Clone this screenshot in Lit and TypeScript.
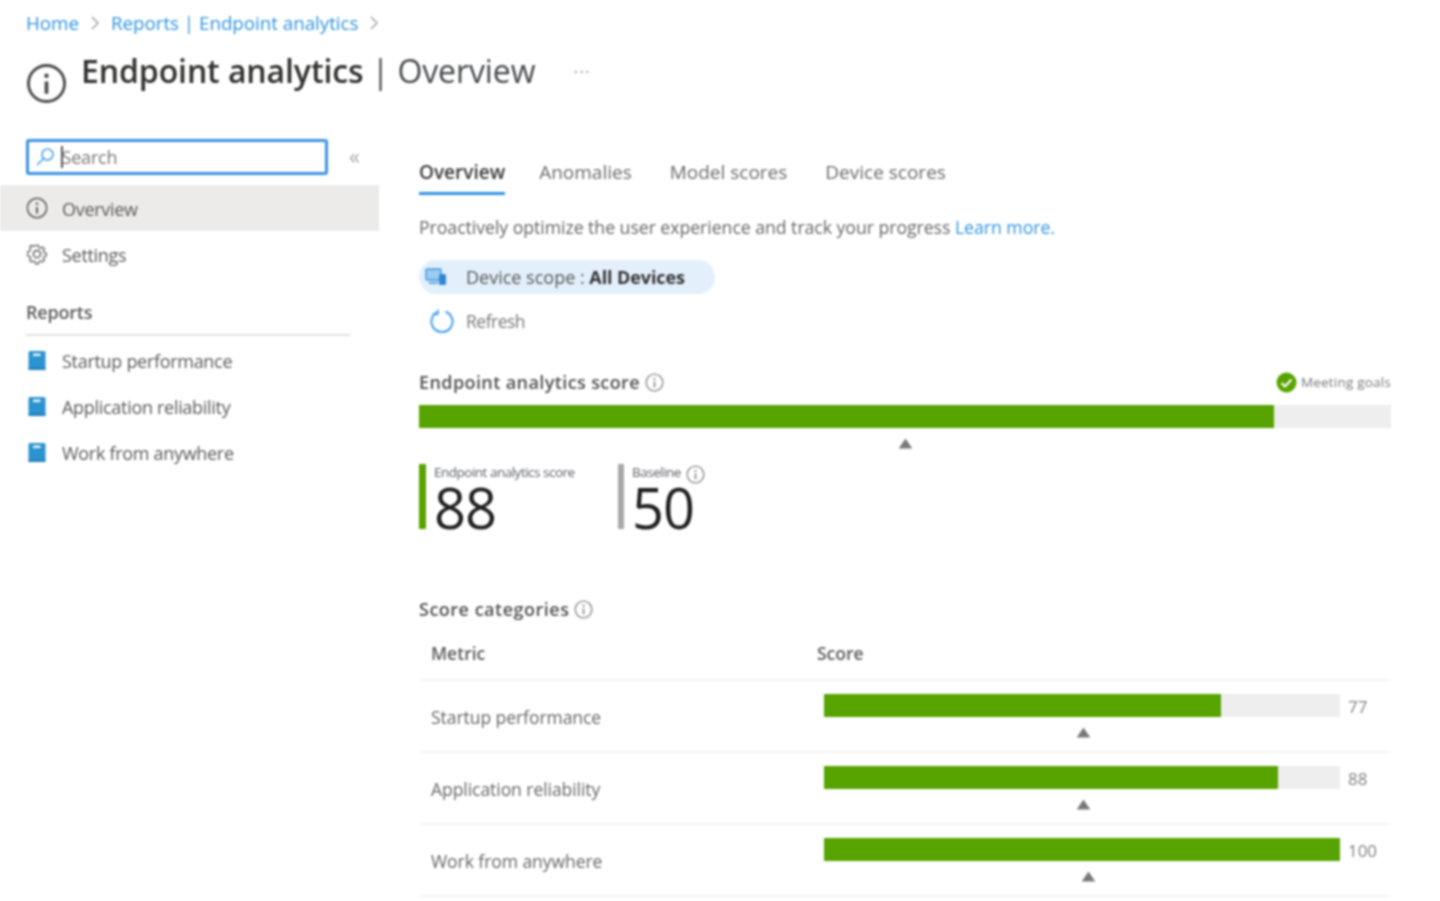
import { LitElement, html, css } from "lit";
import { customElement } from "lit/decorators.js";

const infoIcon = (cls: string) => html`<svg class=${cls} viewBox="0 0 20 20" fill="none" stroke="currentColor">
  <circle cx="10" cy="10" r="8.8" stroke-width="1.4"></circle>
  <circle cx="10" cy="6.2" r="1.1" fill="currentColor" stroke="none"></circle>
  <path d="M10 9v6" stroke-width="1.8"></path></svg>`;

const bookIcon = html`<svg class="ico-book" viewBox="0 0 18 20">
  <rect x="0.5" y="0.5" width="17" height="19" rx="1.5" fill="#2b93cf"></rect>
  <rect x="5" y="3" width="7.5" height="2.6" fill="#e8f4fb"></rect>
  <rect x="0.5" y="17.2" width="17" height="2.3" fill="#2382bd"></rect></svg>`;

const tri = html`<svg class="tri" viewBox="0 0 16 12"><path d="M8 0.5 15.5 11.5H0.5Z" fill="#77787a"></path></svg>`;

const rows = [
  { name: "Startup performance", score: 77, marker: 259 },
  { name: "Application reliability", score: 88, marker: 259 },
  { name: "Work from anywhere", score: 100, marker: 264 },
];

@customElement("app-root")
export class AppRoot extends LitElement {
  static styles = css`
    :host { display: block; height: 901px; overflow: hidden; background: #fff; color: #323130;
      font-family: "Open Sans", "Noto Sans", sans-serif; font-size: 18px; }
    * { box-sizing: border-box; }
    .wrap { height: 901px; filter: blur(0.8px); }
    .crumbs { display: flex; align-items: center; height: 24px; padding-top: 11px; box-sizing: content-box; color: #2f93e0; font-size: 18.8px; letter-spacing: -0.03px; padding-left: 26px; }
    .crumbs svg { width: 10px; height: 16px; margin: 0 11px; }
    .crumbs svg.last { margin: 0 0 0 11px; }
    .head { display: flex; align-items: flex-start; padding-left: 26px; height: 105px; }
    .head .ico-big { width: 41px; height: 41px; margin-top: 28px; color: #4a4a4a; }
    .head h1 { margin: 13px 0 0 14px; font-size: 32px; line-height: 46px; font-weight: 600; letter-spacing: -0.1px; color: #323130; white-space: nowrap; }
    .head h1 span { font-weight: 400; color: #45484a; }
    .dots { margin: 26px 0 0 38px; color: #a0a0a0; font-size: 18px; line-height: 20px; letter-spacing: 1px; }
    .body { display: flex; }
    .side { width: 379px; flex: none; font-size: 18px; letter-spacing: -0.3px; color: #5a5a5a; }
    .searchrow { display: flex; align-items: center; padding-left: 26px; height: 36px; margin-top: -1px; }
    .search { width: 302px; height: 36px; border: 3px solid #3b93e4; border-radius: 3px; display: flex; align-items: center; padding-left: 6px; color: #777; letter-spacing: -0.2px; }
    .search svg { width: 20px; height: 20px; margin-right: 6px; }
    .search .caret { width: 1.5px; height: 22px; background: #555; margin-right: -1px; }
    .collapse { margin-left: 21px; padding-bottom: 4px; color: #a6a6a6; font-size: 22px; line-height: 30px; }
    .nav { display: flex; align-items: center; height: 46px; padding: 2px 0 0 26px; gap: 14px; white-space: nowrap; }
    .nav.sel { background: #edebe9; margin-top: 10px; }
    .nav .ico { width: 22px; height: 22px; margin-top: -2px; color: #5a5a5a; flex: none; }
    .ico-book { width: 18px; height: 21px; margin: -2px 2px 0; flex: none; }
    .group { margin: 14px 29px 1px 26px; height: 45px; line-height: 42px; border-bottom: 2px solid #e3e3e3; font-weight: 600; font-size: 18px; letter-spacing: -0.2px; color: #5c5c5c; }
    .main { width: 972px; margin-left: 40px; flex: none; margin-top: 10px; }
    .tabs { display: flex; gap: 38px; height: 62px; color: #6a6a6a; font-size: 19px; }
    .tab { height: 45px; padding-top: 9px; line-height: 26px; white-space: nowrap; }
    .tab.on { color: #3a3a3a; font-weight: 600; border-bottom: 3px solid #2f93e0; margin-right: -4px; }
    .desc { height: 48px; line-height: 30px; color: #666; font-size: 17.7px; letter-spacing: -0.05px; white-space: nowrap; }
    .desc a { color: #2f93e0; }
    .chip { display: flex; align-items: center; width: 296px; height: 34px; background: #e3f0fb; border-radius: 17px; padding-left: 6px; font-size: 18px; color: #555; white-space: nowrap; }
    .chip svg { width: 23px; height: 20px; margin-right: 18px; flex: none; }
    .chip b { font-weight: 700; color: #333; letter-spacing: -0.1px; }
    .refresh { display: flex; align-items: center; height: 42px; padding-left: 10px; gap: 11px; margin-top: 6px; color: #777; font-size: 17.5px; letter-spacing: -0.5px; }
    .refresh svg { width: 26px; height: 26px; }
    .sec { display: flex; align-items: center; gap: 5px; font-weight: 600; font-size: 18px; letter-spacing: 0.4px; color: #505050; height: 26px; white-space: nowrap; }
    .sec svg { width: 19px; height: 19px; color: #8a8a8a; }
    .scorehead { display: flex; justify-content: space-between; margin-top: 27px; }
    .goal { display: flex; align-items: center; gap: 4px; font-size: 13.5px; letter-spacing: 0.2px; color: #75787c; }
    .goal svg { width: 21px; height: 21px; }
    .track { background: #eeeeee; height: 23px; }
    .fill { background: #57a300; height: 100%; }
    .bigtrack { margin-top: 10px; }
    .tri { display: block; width: 15px; height: 11px; }
    .bigtri { margin: 10px 0 0 479px; }
    .tiles { display: flex; margin-top: 15px; height: 65px; }
    .tile { border-left: 7px solid #57a300; padding-left: 8px; width: 199px; height: 65px; }
    .tile.base { border-left-color: #a8a8a8; border-left-width: 6px; }
    .tile .lab { height: 16px; font-size: 13.5px; line-height: 16px; letter-spacing: -0.5px; color: #5c5f66; white-space: nowrap; display: flex; }
    .tile .lab svg { width: 19px; height: 19px; margin: 1px 0 0 5px; color: #8a8a8a; flex: none; }
    .tile .num { font-size: 56px; line-height: 48px; margin-top: 3px; color: #1f1f1f; letter-spacing: -1px; }
    .cat { margin-top: 67px; letter-spacing: 0.5px; }
    .thead { display: flex; height: 59px; border-bottom: 2px solid #f3f3f3; padding: 5px 12px 0; align-items: center; font-weight: 600; font-size: 17.5px; color: #5c5c5c; }
    .thead .m { width: 386px; }
    .row { display: flex; height: 72px; border-bottom: 2px solid #f3f3f3; padding-left: 12px; color: #666; font-size: 17.5px; letter-spacing: -0.05px; }
    .row .m { width: 393px; padding-top: 21px; line-height: 30px; white-space: nowrap; }
    .row .s { padding-top: 12px; }
    .barline { display: flex; align-items: center; }
    .barline .track { width: 516px; }
    .barline .val { margin: 2px 0 0 8px; font-size: 17px; color: #808080; }
    .row .tri { margin-top: 9px; }
  `;

  render() {
    return html`<div class="wrap">
      <div class="crumbs">Home
        <svg viewBox="0 0 10 16" fill="none" stroke="#a5a5a5" stroke-width="1.5"><path d="M2 2l6 6-6 6"></path></svg>
        Reports | Endpoint analytics
        <svg class="last" viewBox="0 0 10 16" fill="none" stroke="#a5a5a5" stroke-width="1.5"><path d="M2 2l6 6-6 6"></path></svg>
      </div>
      <div class="head">
        ${infoIcon("ico-big")}
        <h1>Endpoint analytics <span>| Overview</span></h1>
        <div class="dots">···</div>
      </div>
      <div class="body">
        <div class="side">
          <div class="searchrow">
            <div class="search">
              <svg viewBox="0 0 20 20" fill="none" stroke="#4a9fe8" stroke-width="1.6"><circle cx="12.5" cy="7.5" r="5.5"></circle><path d="M8.5 11.5 2 18"></path></svg>
              <span class="caret"></span>Search
            </div>
            <div class="collapse">«</div>
          </div>
          <div class="nav sel">${infoIcon("ico")}Overview</div>
          <div class="nav">
            <svg class="ico" viewBox="0 0 22 22" fill="none" stroke="currentColor" stroke-width="1.5">
              <circle cx="11" cy="11" r="3.6"></circle>
              <path d="M9.2 1.5h3.6l.6 2.8 2.1.9 2.4-1.5 2.5 2.5-1.5 2.4.9 2.1 2.8.6v3.6l-2.8.6-.9 2.1 1.5 2.4-2.5 2.5-2.4-1.5-2.1.9-.6 2.8H9.2l-.6-2.8-2.1-.9-2.4 1.5-2.5-2.5 1.5-2.4-.9-2.1-2.8-.6V9.2l2.8-.6.9-2.1-1.5-2.4 2.5-2.5 2.4 1.5 2.1-.9z" transform="translate(2.2 1.1) scale(.8)"></path>
            </svg>Settings
          </div>
          <div class="group">Reports</div>
          ${rows.map((r) => html`<div class="nav">${bookIcon}${r.name}</div>`)}
        </div>
        <div class="main">
          <div class="tabs">
            <div class="tab on">Overview</div>
            <div class="tab">Anomalies</div>
            <div class="tab">Model scores</div>
            <div class="tab">Device scores</div>
          </div>
          <div class="desc">Proactively optimize the user experience and track your progress <a>Learn more.</a></div>
          <div class="chip">
            <svg viewBox="0 0 23 20">
              <rect x="1" y="2" width="15" height="11" rx="1" fill="#9ccbf2" stroke="#3f94e0" stroke-width="1.4"></rect>
              <rect x="14" y="7" width="7" height="11" rx="1.5" fill="#2f86d8"></rect>
              <path d="M4 16h9" stroke="#3f94e0" stroke-width="1.6"></path>
            </svg>
            <span>Device scope :&nbsp;<b>All Devices</b></span>
          </div>
          <div class="refresh">
            <svg viewBox="0 0 26 26" fill="none" stroke="#55a6ec" stroke-width="2.2">
              <path d="M9.5 3.6a10.5 10.5 0 1 0 7 0"></path>
              <path d="M9 1.5v5h-5" stroke-width="1.6" transform="rotate(8 9 4)"></path>
            </svg>
            Refresh
          </div>
          <div class="scorehead">
            <div class="sec">Endpoint analytics score ${infoIcon("")}</div>
            <div class="goal">
              <svg viewBox="0 0 21 21"><circle cx="10.5" cy="10.5" r="10" fill="#57a300"></circle><path d="M5.5 11l3.5 3.5 6.5-7" fill="none" stroke="#fff" stroke-width="2.2"></path></svg>
              Meeting goals
            </div>
          </div>
          <div class="track bigtrack"><div class="fill" style="width:88%"></div></div>
          <div class="bigtri">${tri}</div>
          <div class="tiles">
            <div class="tile"><div class="lab">Endpoint analytics score</div><div class="num">88</div></div>
            <div class="tile base"><div class="lab">Baseline ${infoIcon("")}</div><div class="num">50</div></div>
          </div>
          <div class="sec cat">Score categories ${infoIcon("")}</div>
          <div class="thead"><div class="m">Metric</div><div>Score</div></div>
          ${rows.map(
            (r) => html`<div class="row">
              <div class="m">${r.name}</div>
              <div class="s">
                <div class="barline">
                  <div class="track"><div class="fill" style="width:${r.score}%"></div></div>
                  <div class="val">${r.score}</div>
                </div>
                <div class="tri" style="margin-left:${r.marker - 7}px">${tri}</div>
              </div>
            </div>`
          )}
        </div>
      </div>
    </div>`;
  }
}
